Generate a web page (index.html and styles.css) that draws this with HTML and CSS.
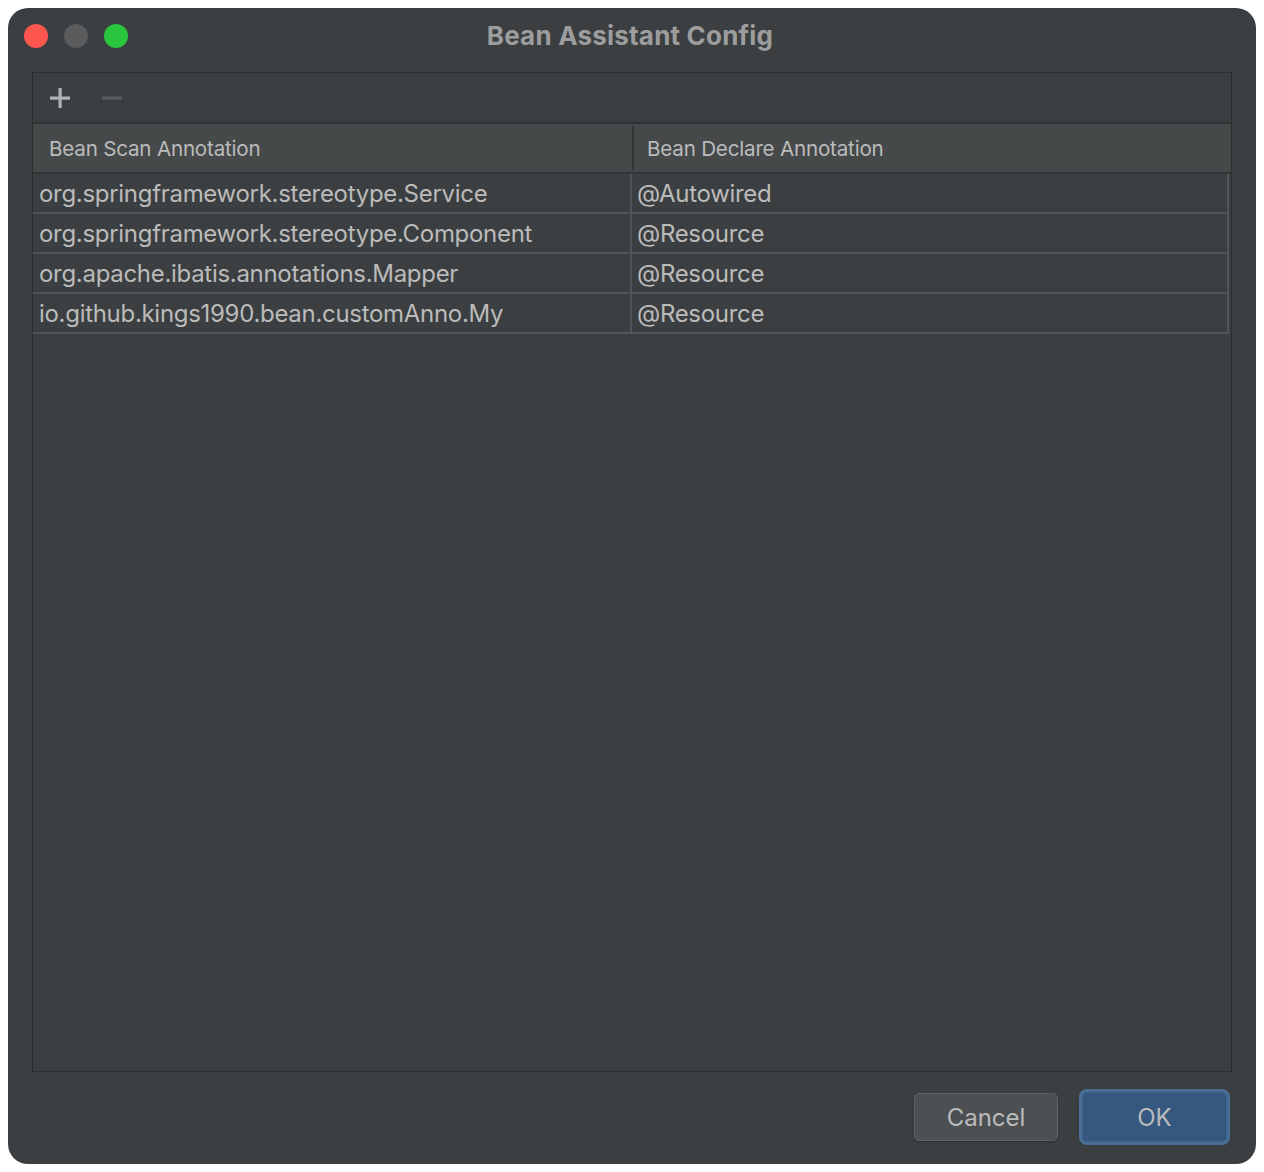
FILE: index.html
```html
<!DOCTYPE html>
<html>
<head>
<meta charset="utf-8">
<link rel="stylesheet" href="styles.css">
</head>
<body>
<div class="window">
  <div class="titlebar">
    <div class="lights">
      <span class="light red"></span>
      <span class="light gray"></span>
      <span class="light green"></span>
    </div>
    <div class="title">Bean Assistant Config</div>
    <div class="spacer"></div>
  </div>
  <div class="panel">
    <div class="toolbar">
      <svg class="tool" width="20" height="20" viewBox="0 0 20 20"><rect x="8.5" y="0" width="3.2" height="20" fill="#afb1b3"/><rect x="0" y="8.5" width="20" height="3.2" fill="#afb1b3"/></svg>
      <svg class="tool" width="20" height="20" viewBox="0 0 20 20"><rect x="0" y="8.5" width="20" height="3" fill="#5a5d5f"/></svg>
    </div>
    <div class="table">
      <div class="thead">
        <div class="th first">Bean Scan Annotation</div>
        <div class="th second">Bean Declare Annotation</div>
      </div>
      <div class="row"><div class="td first">org.springframework.stereotype.Service</div><div class="td second">@Autowired</div></div>
      <div class="row"><div class="td first">org.springframework.stereotype.Component</div><div class="td second">@Resource</div></div>
      <div class="row"><div class="td first">org.apache.ibatis.annotations.Mapper</div><div class="td second">@Resource</div></div>
      <div class="row"><div class="td first">io.github.kings1990.bean.customAnno.My</div><div class="td second">@Resource</div></div>
    </div>
  </div>
  <div class="footer">
    <button class="btn cancel">Cancel</button>
    <button class="btn ok">OK</button>
  </div>
</div>
</body>
</html>
```
FILE: styles.css
```css
html, body {
  margin: 0;
  padding: 0;
  background: #ffffff;
}
body {
  font-family: Inter, "Noto Sans", "Liberation Sans", sans-serif;
}
.window {
  margin: 8px;
  width: 1248px;
  height: 1156px;
  box-sizing: border-box;
  background: #3c3f41;
  border-radius: 20px;
  padding: 0 24px;
  display: flex;
  flex-direction: column;
}
.titlebar {
  height: 56px;
  margin: 0 -24px 8px;
  display: grid;
  grid-template-columns: 1fr auto 1fr;
  align-items: center;
  padding: 0 16px;
}
.lights {
  display: flex;
  gap: 16px;
  align-items: center;
}
.light {
  width: 24px;
  height: 24px;
  border-radius: 50%;
  display: block;
}
.red { background: #fe5750; }
.gray { background: #5a5b5d; }
.green { background: #28c73f; }
.title {
  color: #9d9d9d;
  font-weight: 700;
  font-size: 26px;
  letter-spacing: 0.2px;
  padding-right: 4px;
  padding-bottom: 2px;
}
.panel {
  height: 1000px;
  box-sizing: border-box;
  border: 1px solid #2c2d2e;
  display: flex;
  flex-direction: column;
}
.toolbar {
  height: 51px;
  box-sizing: border-box;
  border-bottom: 2px solid #303234;
  display: flex;
  align-items: center;
  gap: 32px;
  padding: 0 0 0 17px;
}
.tool { display: block; }
.table {
  margin-right: 2px;
}
.thead {
  display: grid;
  grid-template-columns: 599px 1fr;
  height: 50px;
  background: #45494a;
  border-bottom: 2px solid #323436;
  box-sizing: border-box;
  margin-right: -2px;
}
.th {
  color: #bbbbbb;
  font-size: 20.6px;
  display: flex;
  align-items: center;
  padding-left: 16px;
  letter-spacing: -0.2px;
}
.th.second {
  border-left: 2px solid #323436;
  margin: 2px 0;
  padding-left: 13px;
}
.row {
  display: grid;
  grid-template-columns: 597px 1fr;
  height: 40px;
  box-sizing: border-box;
  border-bottom: 2px solid #515557;
}
.td {
  color: #bbbbbb;
  font-size: 24px;
  display: flex;
  align-items: center;
  padding-left: 6px;
  letter-spacing: -0.3px;
  white-space: nowrap;
}
.td.second {
  border-left: 2px solid #515557;
  border-right: 2px solid #515557;
  padding-left: 5px;
}
.footer {
  flex: 1;
  display: flex;
  justify-content: flex-end;
  align-items: center;
  gap: 21px;
  padding-bottom: 2px;
  padding-right: 2px;
}
.btn {
  font-family: Inter, "Noto Sans", "Liberation Sans", sans-serif;
  font-size: 24px;
  color: #bbbbbb;
  box-sizing: border-box;
  cursor: default;
}
.cancel {
  width: 144px;
  height: 48px;
  background: #4c5052;
  border: 1px solid #5e6163;
  border-radius: 5px;
  box-shadow: 0 1px 2px rgba(0,0,0,0.25);
}
.ok {
  width: 151px;
  height: 56px;
  background: #365880;
  border: 3px solid #4a6f96;
  border-radius: 8px;
  box-shadow: inset 0 0 0 1px #3d6189;
}
```
